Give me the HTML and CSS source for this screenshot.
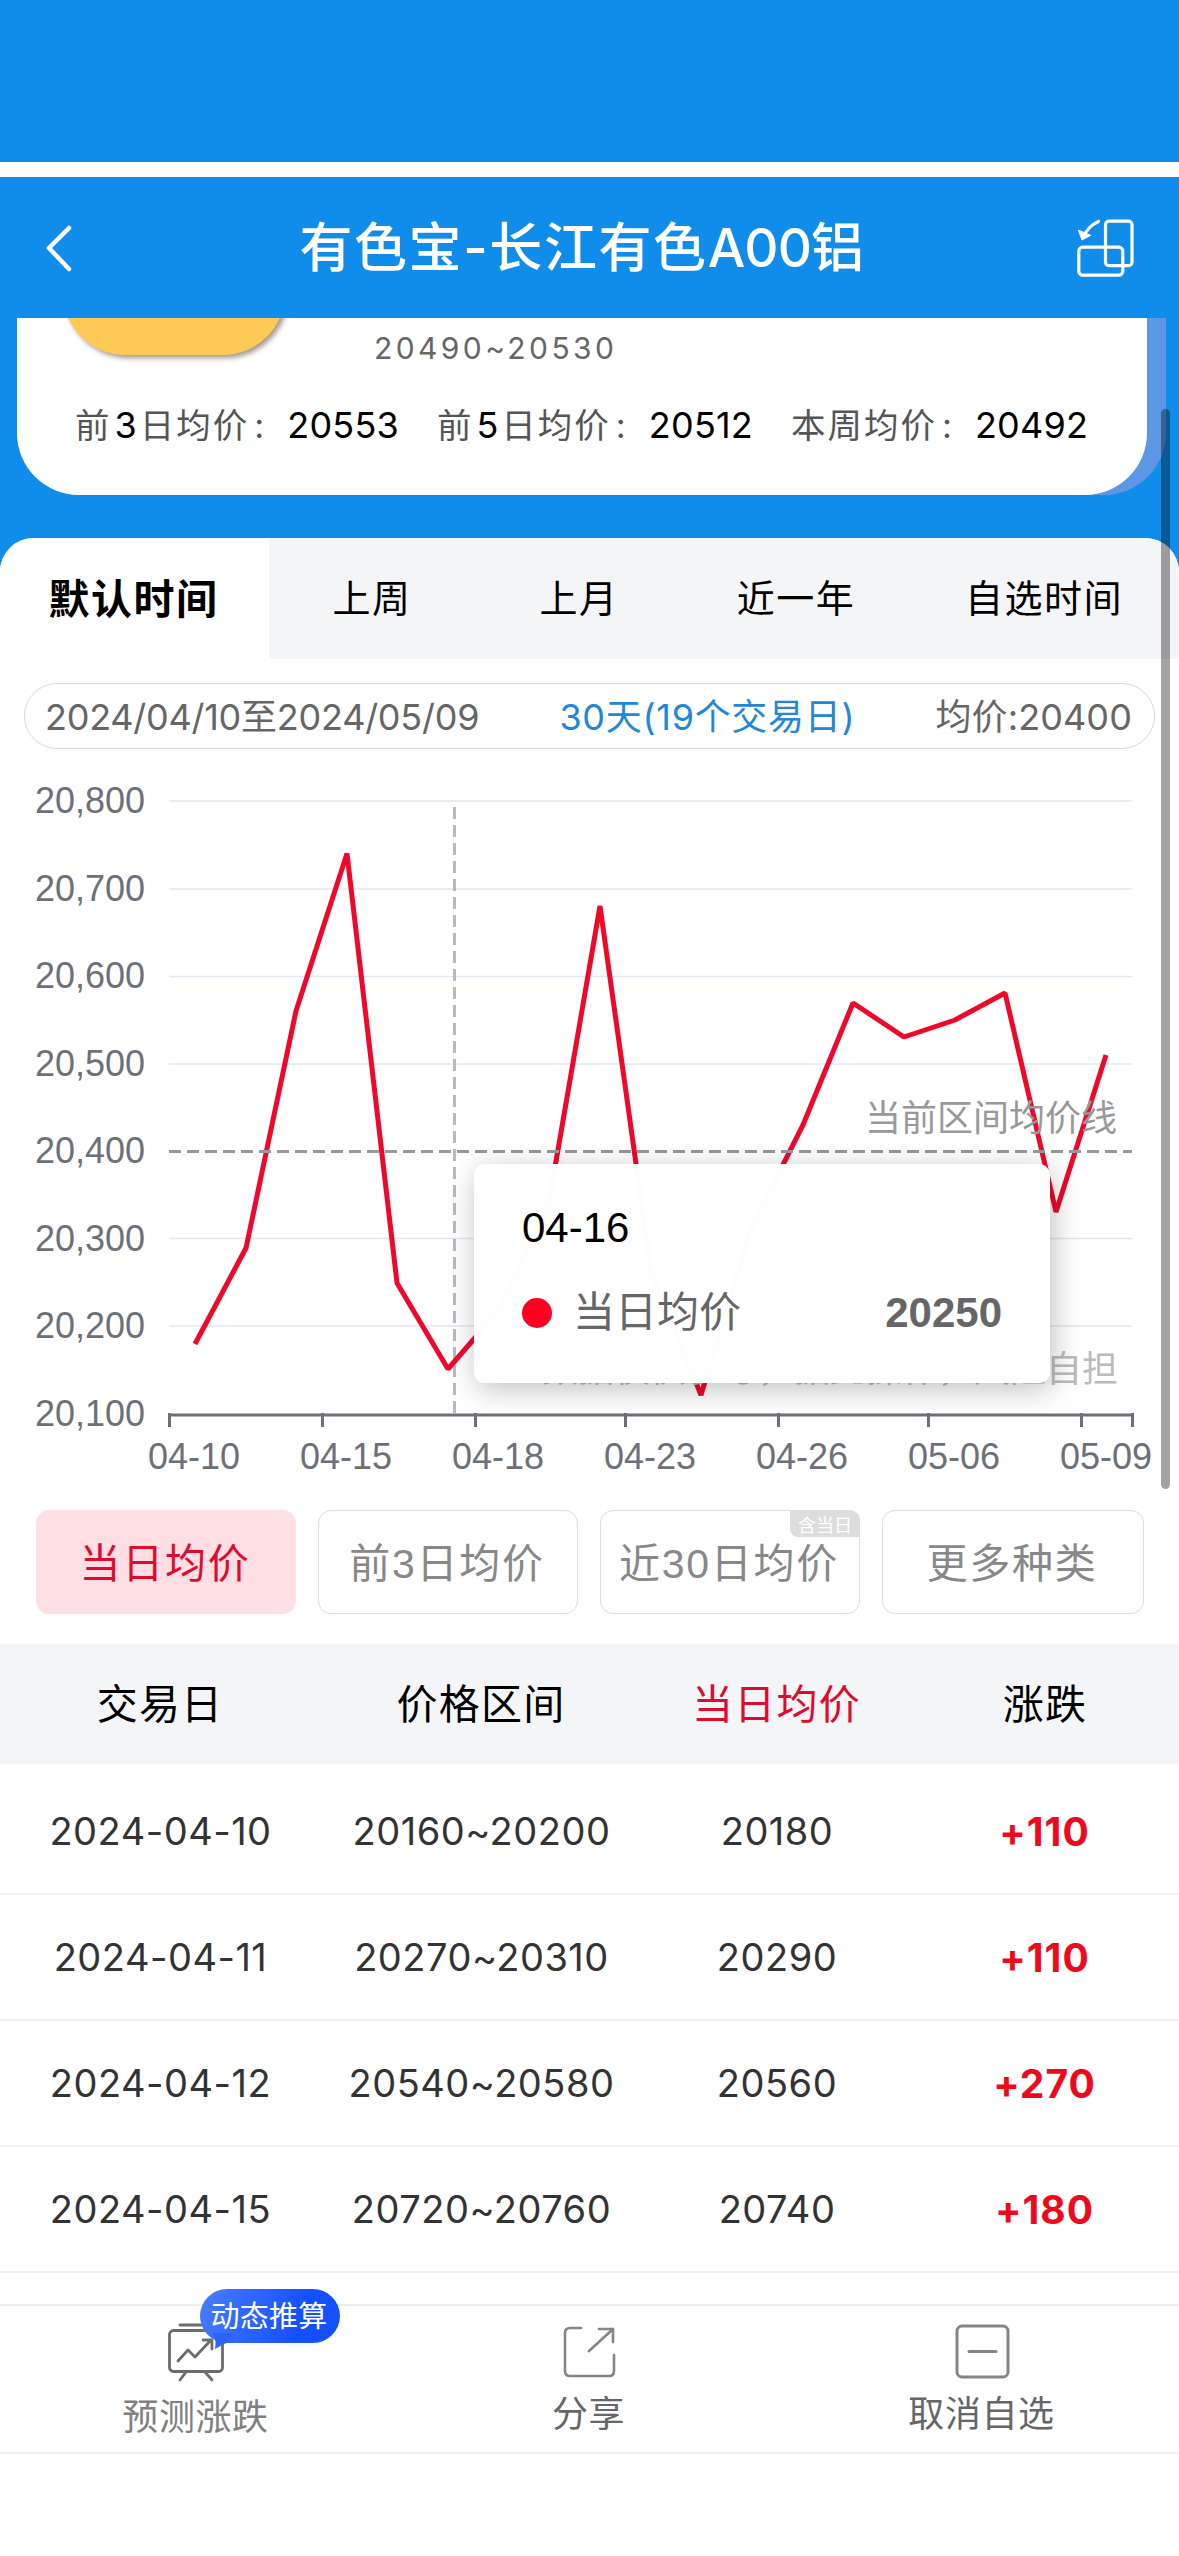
FILE: index.html
```html
<!DOCTYPE html>
<html lang="zh-CN">
<head>
<meta charset="utf-8">
<title>有色宝-长江有色A00铝</title>
<link rel="stylesheet" href="styles.css">
</head>
<body>
<div class="status"></div>
<header class="header">
  <svg class="back" width="80" height="60" viewBox="0 0 80 60"><path d="M69 11 49 31 69 52" fill="none" stroke="#fff" stroke-width="4.5" stroke-linecap="round" stroke-linejoin="round"/></svg>
  <h1 class="title">有色宝-长江有色<span class="latin">A00</span>铝</h1>
  <svg class="rotate" width="60" height="60" viewBox="0 0 60 60" fill="none" stroke="#fff" stroke-width="3.200" stroke-linecap="round" stroke-linejoin="round"><rect x="30.500" y="3.200" width="26.500" height="44.500" rx="3.500"/><rect x="3.800" y="29.200" width="44" height="28" rx="4"/><path d="M23.500 3.500Q13 8 8.500 19"/><path d="M3.500 12.500 7 22 15.500 17.500Z" fill="#fff" stroke-width="1"/></svg>
</header>
<section class="hero">
  <div class="shade">
    <div class="card">
      <div class="card-top"><div class="pill-btn"></div><span class="range">20490~20530</span></div>
      <div class="avgs">
        <div class="avg"><span class="lab">前<b>3</b>日均价<i class="colon">:</i></span><span class="num">20553</span></div>
        <div class="avg"><span class="lab">前<b>5</b>日均价<i class="colon">:</i></span><span class="num">20512</span></div>
        <div class="avg"><span class="lab">本周均价<i class="colon">:</i></span><span class="num">20492</span></div>
      </div>
    </div>
  </div>
</section>
<main class="sheet">
  <nav class="tabs">
    <div class="tab active">默认时间</div><div class="tab">上周</div><div class="tab">上月</div><div class="tab">近一年</div><div class="tab">自选时间</div>
  </nav>
  <div class="summary"><span class="s-range">2024/04/10至2024/05/09</span><span class="s-days">30天(19个交易日)</span><span class="s-avg">均价:20400</span></div>
  <div class="chart">
    <svg width="1179" height="740" viewBox="0 760 1179 740">
      <g stroke="#e4e7f1" stroke-width="1.600">
        <path d="M169 801H1132M169 889H1132M169 976.500H1132M169 1064H1132M169 1238.500H1132M169 1326H1132"/>
      </g>
      <g class="axis" text-anchor="end">
        <text x="145" y="813">20,800</text><text x="145" y="901">20,700</text><text x="145" y="988">20,600</text><text x="145" y="1076">20,500</text><text x="145" y="1163">20,400</text><text x="145" y="1251">20,300</text><text x="145" y="1338">20,200</text><text x="145" y="1426">20,100</text>
      </g>
      <path d="M168 1415H1134M169.500 1413V1427M322.500 1413V1427M475.500 1413V1427M625.500 1413V1427M778.500 1413V1427M928.500 1413V1427M1081.500 1413V1427M1132.500 1413V1427" fill="none" stroke="#6e7079" stroke-width="3"/>
      <g class="axis" text-anchor="middle">
        <text x="194" y="1469">04-10</text><text x="346" y="1469">04-15</text><text x="498" y="1469">04-18</text><text x="650" y="1469">04-23</text><text x="802" y="1469">04-26</text><text x="954" y="1469">05-06</text><text x="1106" y="1469">05-09</text>
      </g>
      <path d="M454.500 807V1413" stroke="#b9bac0" stroke-width="3" stroke-dasharray="12 6"/>
      <polyline points="195,1344 246,1248 296,1011 347,853.500 397,1283 448,1369 499,1310 549,1202 600,906 651,1271 701,1395 752,1226 803,1125 853,1003 904,1037 955,1020 1005,993 1056,1212 1106,1055" fill="none" stroke="#f0082a" stroke-width="5" stroke-linejoin="bevel"/>
      <path d="M169 1151.500H1132" stroke="#999" stroke-width="3" stroke-dasharray="12 6"/>
      <text class="note" x="1117" y="1131" text-anchor="end">当前区间均价线</text>
      <text class="note light" x="1118" y="1382" text-anchor="end">数据仅供参考，据此操作，风险自担</text>
    </svg>
    <div class="tooltip">
      <div class="tip-title">04-16</div>
      <div class="tip-row"><span class="dot"></span><span class="tip-name">当日均价</span><b class="tip-val">20250</b></div>
    </div>
  </div>
  <div class="chips">
    <div class="chip on">当日均价</div><div class="chip">前3日均价</div><div class="chip">近30日均价<span class="tag">含当日</span></div><div class="chip">更多种类</div>
  </div>
  <div class="table">
    <div class="row head"><span>交易日</span><span>价格区间</span><span class="red">当日均价</span><span>涨跌</span></div>
    <div class="row"><span>2024-04-10</span><span>20160~20200</span><span>20180</span><b>+110</b></div>
    <div class="row"><span>2024-04-11</span><span>20270~20310</span><span>20290</span><b>+110</b></div>
    <div class="row"><span>2024-04-12</span><span>20540~20580</span><span>20560</span><b>+270</b></div>
    <div class="row"><span>2024-04-15</span><span>20720~20760</span><span>20740</span><b>+180</b></div>
  </div>
</main>
<footer class="bottom">
  <div class="act forecast">
    <svg width="60" height="60" viewBox="0 0 60 60" fill="none" stroke="#6c6c6c" stroke-width="2.800" stroke-linecap="round" stroke-linejoin="round"><path d="M13 3H36M13 58 19 50M45 58 38 50M11 39 21 28 28 35 44 18M36 18H45V27"/><rect x="2.500" y="8.500" width="53" height="41" rx="4"/></svg>
    <span>预测涨跌</span>
    <div class="bubble">动态推算<svg class="tail" width="24" height="16" viewBox="0 0 24 16"><path d="M0 0C4 5 4 10 3 16 9 13 12 9 22 9V0Z" fill="#2d63fb"/></svg></div>
  </div>
  <div class="act plain">
    <svg width="60" height="60" viewBox="0 0 60 60" fill="none" stroke="#858585" stroke-width="2.600" stroke-linecap="round" stroke-linejoin="round"><path d="M21 5H10Q5 5 5 10V48Q5 53 10 53H49Q54 53 54 48V32M39 6H53V19M53 6 29 28"/></svg>
    <span>分享</span>
  </div>
  <div class="act plain">
    <svg width="60" height="60" viewBox="0 0 60 60" fill="none" stroke="#858585" stroke-width="3" stroke-linecap="round"><rect x="4" y="3" width="51" height="51" rx="5"/><path d="M16 28.500H43"/></svg>
    <span>取消自选</span>
  </div>
</footer>
<div class="scrollbar"></div>
</body>
</html>
```
FILE: styles.css
```css
* { box-sizing: border-box; }
body { margin: 0; width: 1179px; height: 2556px; position: relative; overflow: hidden; background: #fff; color: #000; font-family: Inter, "Noto Sans CJK SC", sans-serif; white-space: nowrap; }
svg { display: block; }
.status { height: 162px; margin-bottom: 15px; background: #108cea; }
.header { height: 141px; background: #108cea; display: grid; grid-template-columns: 150px 1fr 150px; align-items: center; }
.back { margin-top: -1px; }
.title { margin: 0; padding-right: 14px; color: #fff; font-size: 53px; line-height: 70px; font-weight: 500; letter-spacing: 1.6px; text-align: center; }
.latin { letter-spacing: -.9px; }
.rotate { margin-left: 46px; }
.hero { height: 220px; background: #108cea; padding-left: 17px; overflow: hidden; }
.shade { width: 1149px; height: 177px; background: #5b97e5; border-radius: 0 0 62px 62px; }
.card { width: 1130px; height: 177px; background: #fff; border-radius: 0 0 62px 62px; }
.card-top { height: 62px; display: flex; align-items: flex-start; }
.pill-btn { width: 222px; height: 82px; margin: -45px 0 0 46px; border-radius: 0 0 62px 62px; background: #ffc955; box-shadow: 3px 3px 5px rgba(70,50,40,.5); }
.range { margin-left: 89px; font-size: 30px; line-height: 61px; letter-spacing: 3.4px; color: #666; }
.avgs { display: flex; gap: 38px; padding-left: 58px; height: 85px; align-items: center; }
.avg { display: flex; align-items: baseline; }
.lab { font-size: 34.500px; letter-spacing: 2px; color: #555; }
.lab b { font-size: 36px; font-weight: 400; color: #000; margin: 0 1px 0 3px; }
.colon { display: inline-block; font-style: normal; width: 38px; padding-left: 5px; }
.num { font-size: 36px; letter-spacing: .2px; }
.sheet { display: block; background: #fff; border-radius: 34px 34px 0 0; overflow: hidden; box-shadow: 0 -40px 0 #108cea; position: relative; }
.tabs { height: 121px; display: grid; grid-template-columns: 269px 204px 210px 224px 272px; background: #f4f5f7; }
.tab { display: flex; align-items: center; justify-content: center; padding: 0 0 6px 2px; font-size: 38px; letter-spacing: 1.500px; }
.tab.active { background: #fff; padding-right: 4px; font-size: 41px; font-weight: 700; }
.summary { margin: 24px 24px 0; height: 66px; border: 1px solid #d8d8dc; border-radius: 33px; display: flex; align-items: center; justify-content: space-between; padding: 0 22px 4px 20px; font-size: 36px; letter-spacing: -.25px; color: #666; }
.s-days { color: #2386d8; letter-spacing: .7px; }
.s-avg { letter-spacing: .1px; }
.chart { position: relative; height: 740px; margin-top: 11px; }
.axis { font: 36px "Liberation Sans", sans-serif; fill: #6e7079; }
.note { font: 36px "Noto Sans CJK SC", sans-serif; fill: #999; }
.note.light { fill: #bbb; }
.tooltip { position: absolute; left: 474px; top: 404px; width: 576px; height: 219px; border-radius: 11px; background: rgba(255,255,255,.99); box-shadow: 3px 6px 30px rgba(0,0,0,.25); padding: 40px 48px 0; font-family: "Liberation Sans", "Noto Sans CJK SC", sans-serif; font-size: 42px; }
.tip-title { line-height: 48px; }
.tip-row { margin-top: 31px; line-height: 60px; display: flex; align-items: center; color: #666; }
.dot { width: 30px; height: 30px; border-radius: 50%; background: #ff0022; margin-right: 21px; }
.tip-name { font-size: 42px; }
.tip-val { margin-left: auto; }
.chips { display: grid; grid-template-columns: 260px 260px 260px 262px; gap: 22px; padding: 0 36px; margin-top: 10px; height: 104px; }
.chip { position: relative; border: 1px solid #ddd; border-radius: 13px; display: flex; align-items: center; justify-content: center; padding: 0 2px 5px 0; font-size: 41px; letter-spacing: 1.700px; color: #888; font-family: "Liberation Sans", "Noto Sans CJK SC", sans-serif; }
.chip.on { background: #ffdee4; border-color: #ffdee4; color: #e00a2c; }
.tag { position: absolute; right: -1px; top: -1px; width: 70px; height: 27px; border-radius: 0 10px 0 8px; background: #ddd; color: #fff; font-size: 18px; letter-spacing: 0; display: flex; align-items: center; justify-content: center; }
.table { margin-top: 30px; }
.row { display: grid; grid-template-columns: 321px 321px 270px 267px; height: 126px; align-items: center; text-align: center; border-bottom: 2px solid #eee; font-size: 38px; letter-spacing: .5px; color: #333; }
.row b { color: #ee0a1c; font-weight: 700; font-size: 39px; letter-spacing: 1px; padding-right: 2px; }
.row.head { height: 120px; margin-bottom: 5px; padding-bottom: 6px; border: 0; background: #f4f5f7; color: #000; font-size: 41px; letter-spacing: 1.200px; }
.row.head span { margin-right: 1px; }
.row.head .red { color: #e00a2c; }
.bottom { position: absolute; left: 0; right: 0; top: 2304px; height: 150px; border-top: 2px solid #eee; border-bottom: 2px solid #eee; display: grid; grid-template-columns: repeat(3, 393px); background: #fff; }
.act { position: relative; display: flex; flex-direction: column; align-items: center; padding-top: 16px; font-size: 36px; line-height: 52px; letter-spacing: .6px; color: #808080; }
.act span { margin-top: 9px; padding-right: 2px; }
.act.plain { padding-top: 17px; color: #666; }
.act.plain span { margin-top: 5px; }
.bubble { position: absolute; left: 200px; top: -17px; width: 140px; height: 54px; border-radius: 27px; background: linear-gradient(110deg,#4a7dfc,#1450ff 70%); color: #fff; font-size: 29px; line-height: 56px; letter-spacing: .3px; text-align: center; padding-right: 2px; }
.tail { position: absolute; left: 12px; top: 44px; }
.scrollbar { position: absolute; left: 1161px; top: 409px; width: 9px; height: 1080px; border-radius: 5px; background: rgba(0,0,0,.36); }
```
